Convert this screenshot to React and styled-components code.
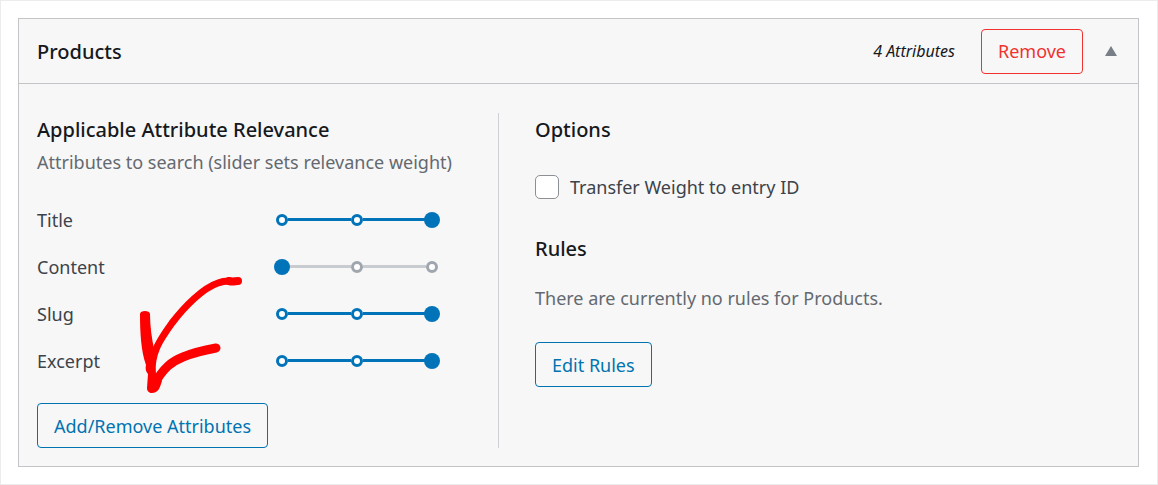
import { useState } from "react";
import styled, { createGlobalStyle } from "styled-components";

const GlobalStyle = createGlobalStyle`
  * {
    box-sizing: border-box;
  }
  body {
    margin: 0;
    background: #fff;
    color: #16191d;
    font-family: "Noto Sans", "Open Sans", sans-serif;
    font-size: 18px;
    line-height: 26px;
  }
`;

const Page = styled.main`
  padding: 17px 18px 17px 17px;
  border: 1px solid #ececec;
`;

const Panel = styled.section`
  position: relative;
  background: #f7f7f7;
  border: 1px solid #c3c4c7;
`;

const Header = styled.header`
  display: flex;
  align-items: center;
  height: 65px;
  padding: 0 21px 0 18px;
  border-bottom: 1px solid #c3c4c7;
`;

const Title = styled.h2`
  margin: 0;
  font-size: 20px;
  line-height: 33px;
  font-weight: 500;
`;

const Count = styled.em`
  margin-left: auto;
  font-size: 16px;
`;

const Button = styled.button`
  height: 45px;
  padding: 0 16px;
  border: 1px solid ${(props) => props.$color};
  border-radius: 4px;
  background: transparent;
  color: ${(props) => props.$color};
  font: inherit;
  cursor: pointer;
`;

const RemoveButton = styled(Button)`
  margin: 0 22px 0 26px;
`;

const Toggle = styled.button`
  display: flex;
  padding: 0;
  border: 0;
  background: none;
  cursor: pointer;
`;

const Body = styled.div`
  display: grid;
  grid-template-columns: minmax(0, 462px) 1fr;
  padding: 29px 18px 18px;
`;

const Relevance = styled.div`
  border-right: 1px solid #d0d1d4;
`;

const Settings = styled.div`
  padding-left: 36px;
`;

const Muted = styled.p`
  margin: 0;
  line-height: 32px;
  color: #646970;
`;

const Attributes = styled.div`
  margin: 18px 0 19px;
`;

const AttributeRow = styled.div`
  display: grid;
  grid-template-columns: 237px 166px;
  align-items: center;
  height: 47px;
  color: #3c434a;
`;

const Slider = styled.div`
  position: relative;
  display: flex;
  align-items: center;
  height: 16px;
  padding: 0 2px;
`;

const Stop = styled.span`
  width: 12px;
  height: 12px;
  border: 3px solid ${(props) => (props.$on ? "#0073b9" : "#9fa6ad")};
  border-radius: 50%;
  background: #fff;
`;

const Line = styled.span`
  flex: 1;
  height: 3px;
  background: ${(props) => (props.$on ? "#0073b9" : "#c8ccd0")};
`;

// the native track stays hidden, only the thumb shows above the stops
const Range = styled.input`
  position: absolute;
  inset: 0;
  width: 100%;
  height: 16px;
  margin: 0;
  appearance: none;
  background: transparent;
  cursor: pointer;

  &::-webkit-slider-thumb {
    appearance: none;
    width: 16px;
    height: 16px;
    border-radius: 50%;
    background: #0073b9;
  }
`;

const CheckLabel = styled.label`
  display: flex;
  align-items: center;
  gap: 11px;
  margin: 28px 0 32px;
  color: #3c434a;
`;

const Checkbox = styled.input`
  width: 24px;
  height: 24px;
  margin: 0;
  appearance: none;
  border: 1px solid #8c8f94;
  border-radius: 5px;
  background: #fff;

  &:checked {
    background: #0073b9;
  }
`;

const RulesText = styled(Muted)`
  margin: 17px 0 28px;
`;

const Arrow = styled.svg`
  position: absolute;
  left: 120px;
  top: 258px;
  pointer-events: none;
`;

const attributes = [
  { name: "Title", weight: 2 },
  { name: "Content", weight: 0 },
  { name: "Slug", weight: 2 },
  { name: "Excerpt", weight: 2 },
];

function Attribute({ name, weight }) {
  const [value, setValue] = useState(weight);
  const id = `weight-${name.toLowerCase()}`;

  return (
    <AttributeRow>
      <label htmlFor={id}>{name}</label>
      <Slider>
        <Stop $on={value >= 1} />
        <Line $on={value >= 1} />
        <Stop $on={value >= 1} />
        <Line $on={value >= 2} />
        <Stop $on={value >= 2} />
        <Range
          id={id}
          type="range"
          min="0"
          max="2"
          value={value}
          onChange={(e) => setValue(Number(e.target.value))}
        />
      </Slider>
    </AttributeRow>
  );
}

function App() {
  const [open, setOpen] = useState(true);

  return (
    <Page>
      <GlobalStyle />
      <Panel>
        <Header>
          <Title>Products</Title>
          <Count>4 Attributes</Count>
          <RemoveButton $color="#f0322f">Remove</RemoveButton>
          <Toggle aria-label="Toggle Products" onClick={() => setOpen(!open)}>
            <svg width="12" height="10" viewBox="0 0 12 10">
              <path d="M6 0L12 10H0z" fill="#787f87" />
            </svg>
          </Toggle>
        </Header>
        {open && (
          <Body>
            <Relevance>
              <Title as="h3">Applicable Attribute Relevance</Title>
              <Muted>Attributes to search (slider sets relevance weight)</Muted>
              <Attributes>
                {attributes.map((item) => (
                  <Attribute key={item.name} {...item} />
                ))}
              </Attributes>
              <Button $color="#0073b1">Add/Remove Attributes</Button>
            </Relevance>
            <Settings>
              <Title as="h3">Options</Title>
              <CheckLabel>
                <Checkbox type="checkbox" />
                Transfer Weight to entry ID
              </CheckLabel>
              <Title as="h3">Rules</Title>
              <RulesText>There are currently no rules for Products.</RulesText>
              <Button $color="#0073b1">Edit Rules</Button>
            </Settings>
          </Body>
        )}
        <Arrow
          width="106"
          height="120"
          viewBox="0 0 106 120"
          fill="none"
          stroke="#fe0000"
          strokeLinecap="round"
          strokeLinejoin="round"
          aria-hidden="true"
        >
          <path
            d="M13 98C12 76 20 64 33 46C46 29 64 11 79 6C84 4 88 4 90 4"
            strokeWidth="7"
          />
          <path d="M90 4C94 5 96 4 99 4" strokeWidth="8" />
          <path
            d="M14 110C24 90 34 84 44 80C56 75 66 73 77 71"
            strokeWidth="9"
          />
          <path
            d="M1 37C1 33 11 33 11 37C11 50 13 62 15 72L17 98L23 104C22 107 21 110 20 112C17 117 8 118 8 111L9 97C7 95 6 92 7 88C2 74 1 55 1 37Z"
            fill="#fe0000"
            stroke="none"
          />
        </Arrow>
      </Panel>
    </Page>
  );
}

export default App;
